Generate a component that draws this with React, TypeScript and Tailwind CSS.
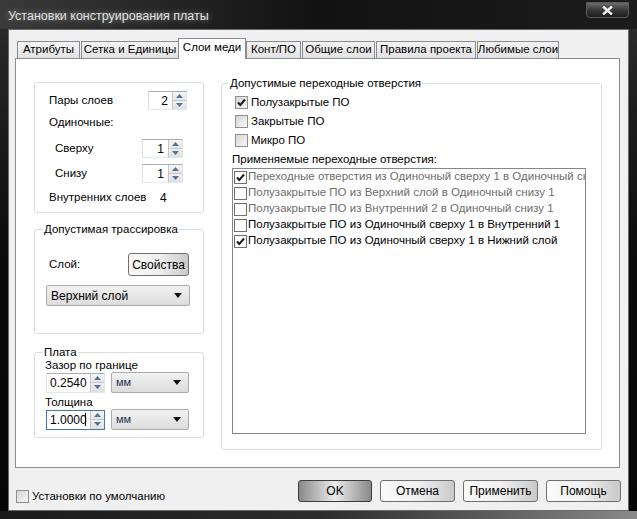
import React from "react";

const font = { fontFamily: '"Liberation Sans", Arial, sans-serif' };

function Check({ on, flat }: { on?: boolean; flat?: boolean }) {
  return (
    <span
      className={`relative inline-flex w-[13px] h-[13px] shrink-0 items-center justify-center border ${
        flat ? "border-[#6f6f6f] bg-white" : "border-[#8f8f8f] bg-gradient-to-br from-[#d6d6d6] to-[#f8f8f8]"
      }`}
    >
      {on && (
        <svg width="11" height="11" viewBox="0 0 11 11" className="absolute">
          <path d="M2 5.5 L4.3 8 L9 2.5" fill="none" stroke="#1b1b1b" strokeWidth="2" />
        </svg>
      )}
    </span>
  );
}

function SpinArrows() {
  return (
    <div className="flex flex-col w-[14px] h-full border-l border-[#c5c5c5]">
      <div className="flex-1 flex items-center justify-center bg-gradient-to-b from-[#f7f7f7] to-[#e6e6e6] border-b border-[#c5c5c5]">
        <svg width="7" height="4" viewBox="0 0 7 4">
          <path d="M0 4 L3.5 0 L7 4 Z" fill="#56709f" />
        </svg>
      </div>
      <div className="flex-1 flex items-center justify-center bg-gradient-to-b from-[#f0f0f0] to-[#e0e0e0]">
        <svg width="7" height="4" viewBox="0 0 7 4">
          <path d="M0 0 L7 0 L3.5 4 Z" fill="#56709f" />
        </svg>
      </div>
    </div>
  );
}

function Spin({ value, className, left, focused }: { value: string; className: string; left?: boolean; focused?: boolean }) {
  return (
    <div
      className={`flex border bg-white ${
        focused
          ? "border-[#3d7bad]"
          : "border-t-[#abadb3] border-l-[#dbdfe6] border-r-[#e2e3ea] border-b-[#e3e9ef]"
      } ${className}`}
    >
      <div className={`flex-1 flex items-center text-[12px] ${left ? "justify-start pl-[3px]" : "justify-end pr-[4px]"}`}>
        {value}
        {focused && <span className="w-[1px] h-[13px] bg-black -ml-[2px]" />}
      </div>
      <SpinArrows />
    </div>
  );
}

function Select({ value, className, blue }: { value: string; className: string; blue?: boolean }) {
  return (
    <div
      className={`flex items-center justify-between border border-[#acacac] rounded-[2px] bg-gradient-to-b from-[#f2f2f2] to-[#dcdcdc] px-[4px] ${className}`}
    >
      <span className={blue ? "text-[#23335a] text-[11px]" : "text-[12px]"}>{value}</span>
      <svg width="8" height="5" viewBox="0 0 8 5" className="mr-[3px]">
        <path d="M0 0 L8 0 L4 5 Z" fill="#111" />
      </svg>
    </div>
  );
}

function Btn({ label, className, def }: { label: string; className: string; def?: boolean }) {
  return (
    <div
      className={`flex items-center justify-center border rounded-[3px] text-[12px] ${
        def
          ? "border-[#3c3c3c] bg-gradient-to-r from-[#8a8a8a] via-[#ececec] to-[#8a8a8a]"
          : "border-[#707070] bg-gradient-to-r from-[#fafafa] via-[#f0f0f0] to-[#c9c9c9]"
      } ${className}`}
    >
      {label}
    </div>
  );
}

const tabs = [
  { label: "Атрибуты", w: "w-[63px]" },
  { label: "Сетка и Единицы", w: "w-[98px]" },
  { label: "Слои меди", w: "w-[68px]", active: true },
  { label: "Конт/ПО", w: "w-[55px]" },
  { label: "Общие слои", w: "w-[73px]" },
  { label: "Правила проекта", w: "w-[100px]" },
  { label: "Любимые слои", w: "w-[82px]" },
];

const vias = [
  { text: "Переходные отверстия из Одиночный сверху 1 в Одиночный снизу 1", on: true, dim: true },
  { text: "Полузакрытые ПО из Верхний слой в Одиночный снизу 1", dim: true },
  { text: "Полузакрытые ПО из Внутренний 2 в Одиночный снизу 1", dim: true },
  { text: "Полузакрытые ПО из Одиночный сверху 1 в Внутренний 1" },
  { text: "Полузакрытые ПО из Одиночный сверху 1 в Нижний слой", on: true },
];

export default function App() {
  return (
    <div
      className="w-[637px] h-[519px] flex flex-col bg-gradient-to-b from-[#2e2e2e] via-[#0b0b0b] to-[#060606] text-black overflow-hidden text-[11.5px]"
      style={font}
    >
      {/* Title bar */}
      <div className="h-[29px] flex items-start shrink-0 bg-gradient-to-r from-[#3a3a3a] via-[#121212] to-[#1c1c1c]">
        <div className="pl-[8px] pt-[7px] text-[12.5px] text-[#e2e2e2] [text-shadow:0_0_6px_#9a9a9a]">
          Установки конструирования платы
        </div>
        <div className="flex-1" />
        <div className="mt-[2px] mr-[8px] w-[43px] h-[16px] rounded-b-[4px] border border-[#5b5b5b] bg-gradient-to-b from-[#6d6d6d] via-[#3a3a3a] to-[#1d1d1d] flex items-center justify-center">
          <svg width="11" height="9" viewBox="0 0 11 9">
            <path d="M1 0.5 L10 8.5 M10 0.5 L1 8.5" stroke="#f2f2f2" strokeWidth="2.4" />
          </svg>
        </div>
      </div>

      {/* Client area */}
      <div className="mx-[8px] h-[482px] bg-[#f0f0f0] flex flex-col border border-[#6a6a6a]">
        {/* Tabs */}
        <div className="flex items-end h-[20px] mt-[8px] ml-[7px] relative z-10 whitespace-nowrap">
          {tabs.map((t) =>
            t.active ? (
              <div
                key={t.label}
                className={`${t.w} h-[21px] -mb-[1px] bg-white border border-b-0 border-[#898c95] flex items-center justify-center pb-[2px] -mx-[1px]`}
              >
                {t.label}
              </div>
            ) : (
              <div
                key={t.label}
                className={`${t.w} h-[17px] bg-gradient-to-b from-[#f3f3f3] to-[#e3e3e3] border border-[#898c95] border-b-0 flex items-center justify-center ml-[1px]`}
              >
                {t.label}
              </div>
            )
          )}
        </div>

        {/* Panel */}
        <div className="ml-[6px] w-[605px] h-[410px] bg-white border border-[#898c95] flex pl-[18px]">
          {/* Left column */}
          <div className="w-[170px] flex flex-col mt-[23px]">
            <div className="h-[131px] border border-[#d5dfe5] rounded-[3px] flex flex-col pl-[14px] pt-[8px]">
              <div className="flex items-center h-[19px]">
                <span className="w-[99px]">Пары слоев</span>
                <Spin value="2" className="w-[39px] h-[19px]" />
              </div>
              <div className="h-[16px] mt-[5px] flex items-center">Одиночные:</div>
              <div className="flex items-center h-[19px] mt-[8px]">
                <span className="w-[93px] pl-[6px]">Сверху</span>
                <Spin value="1" className="w-[41px] h-[19px]" />
              </div>
              <div className="flex items-center h-[19px] mt-[6px]">
                <span className="w-[93px] pl-[6px]">Снизу</span>
                <Spin value="1" className="w-[41px] h-[19px]" />
              </div>
              <div className="flex items-center h-[16px] mt-[7px]">
                <span className="w-[111px]">Внутренних слоев</span>
                <span className="text-[12px]">4</span>
              </div>
            </div>

            <fieldset className="mt-[9px] h-[112px] border border-[#d5dfe5] rounded-[3px]">
              <legend className="ml-[8px] px-[1px] leading-[14px]">Допустимая трассировка</legend>
              <div className="flex items-center h-[23px] mt-[17px] pl-[14px]">
                <span className="w-[79px]">Слой:</span>
                <Btn label="Свойства" className="w-[61px] h-[23px]" />
              </div>
              <Select value="Верхний слой" className="ml-[11px] mt-[9px] w-[144px] h-[21px]" />
            </fieldset>

            <fieldset className="mt-[11px] h-[93px] border border-[#d5dfe5] rounded-[3px] pl-[10px]">
              <legend className="ml-[-2px] px-[1px] leading-[14px]">Плата</legend>
              <div className="leading-[13px] h-[13px]">Зазор по границе</div>
              <div className="flex items-center gap-[6px] pl-[1px]">
                <Spin value="0.2540" left className="w-[59px] h-[20px]" />
                <Select value="мм" blue className="w-[78px] h-[21px]" />
              </div>
              <div className="leading-[13px] h-[13px] mt-[3px]">Толщина</div>
              <div className="flex items-center gap-[6px] pl-[1px]">
                <Spin value="1.0000" left focused className="w-[59px] h-[20px]" />
                <Select value="мм" blue className="w-[78px] h-[21px]" />
              </div>
            </fieldset>
          </div>

          {/* Right group */}
          <fieldset className="ml-[17px] mt-[17px] w-[381px] h-[374px] border border-[#d5dfe5] rounded-[3px] pl-[10px]">
            <legend className="ml-[-3px] px-[1px] leading-[14px]">Допустимые переходные отверстия</legend>
            <div className="flex items-center gap-[3px] h-[19px] mt-[3px] ml-[3px]">
              <Check on />
              <span>Полузакрытые ПО</span>
            </div>
            <div className="flex items-center gap-[3px] h-[19px] ml-[3px]">
              <Check />
              <span>Закрытые ПО</span>
            </div>
            <div className="flex items-center gap-[3px] h-[19px] ml-[3px]">
              <Check />
              <span>Микро ПО</span>
            </div>
            <div className="leading-[14px] mt-[2px]">Применяемые переходные отверстия:</div>
            <div className="mt-[2px] w-[354px] h-[266px] border border-[#828790] bg-white overflow-hidden">
              {vias.map((v) => (
                <div
                  key={v.text}
                  className={`flex items-center h-[16px] pl-[1px] gap-[1px] whitespace-nowrap ${
                    v.dim ? "text-[#6d6d6d]" : "text-black"
                  }`}
                >
                  <Check on={v.on} flat />
                  <span>{v.text}</span>
                </div>
              ))}
            </div>
          </fieldset>
        </div>

        {/* Bottom row */}
        <div className="flex-1 flex items-start pr-[7px]">
          <div className="flex items-center gap-[3px] ml-[7px] mt-[20px]">
            <Check />
            <span>Установки по умолчанию</span>
          </div>
          <div className="flex-1" />
          <div className="flex gap-[8px] mt-[12px]">
            <Btn label="OK" def className="w-[74px] h-[22px]" />
            <Btn label="Отмена" className="w-[75px] h-[22px]" />
            <Btn label="Применить" className="w-[75px] h-[22px]" />
            <Btn label="Помощь" className="w-[75px] h-[22px]" />
          </div>
        </div>
      </div>
      <div className="flex-1 bg-gradient-to-r from-[#1a1a1a] via-[#2c2c2c] to-[#8a8a8a]" />
    </div>
  );
}
